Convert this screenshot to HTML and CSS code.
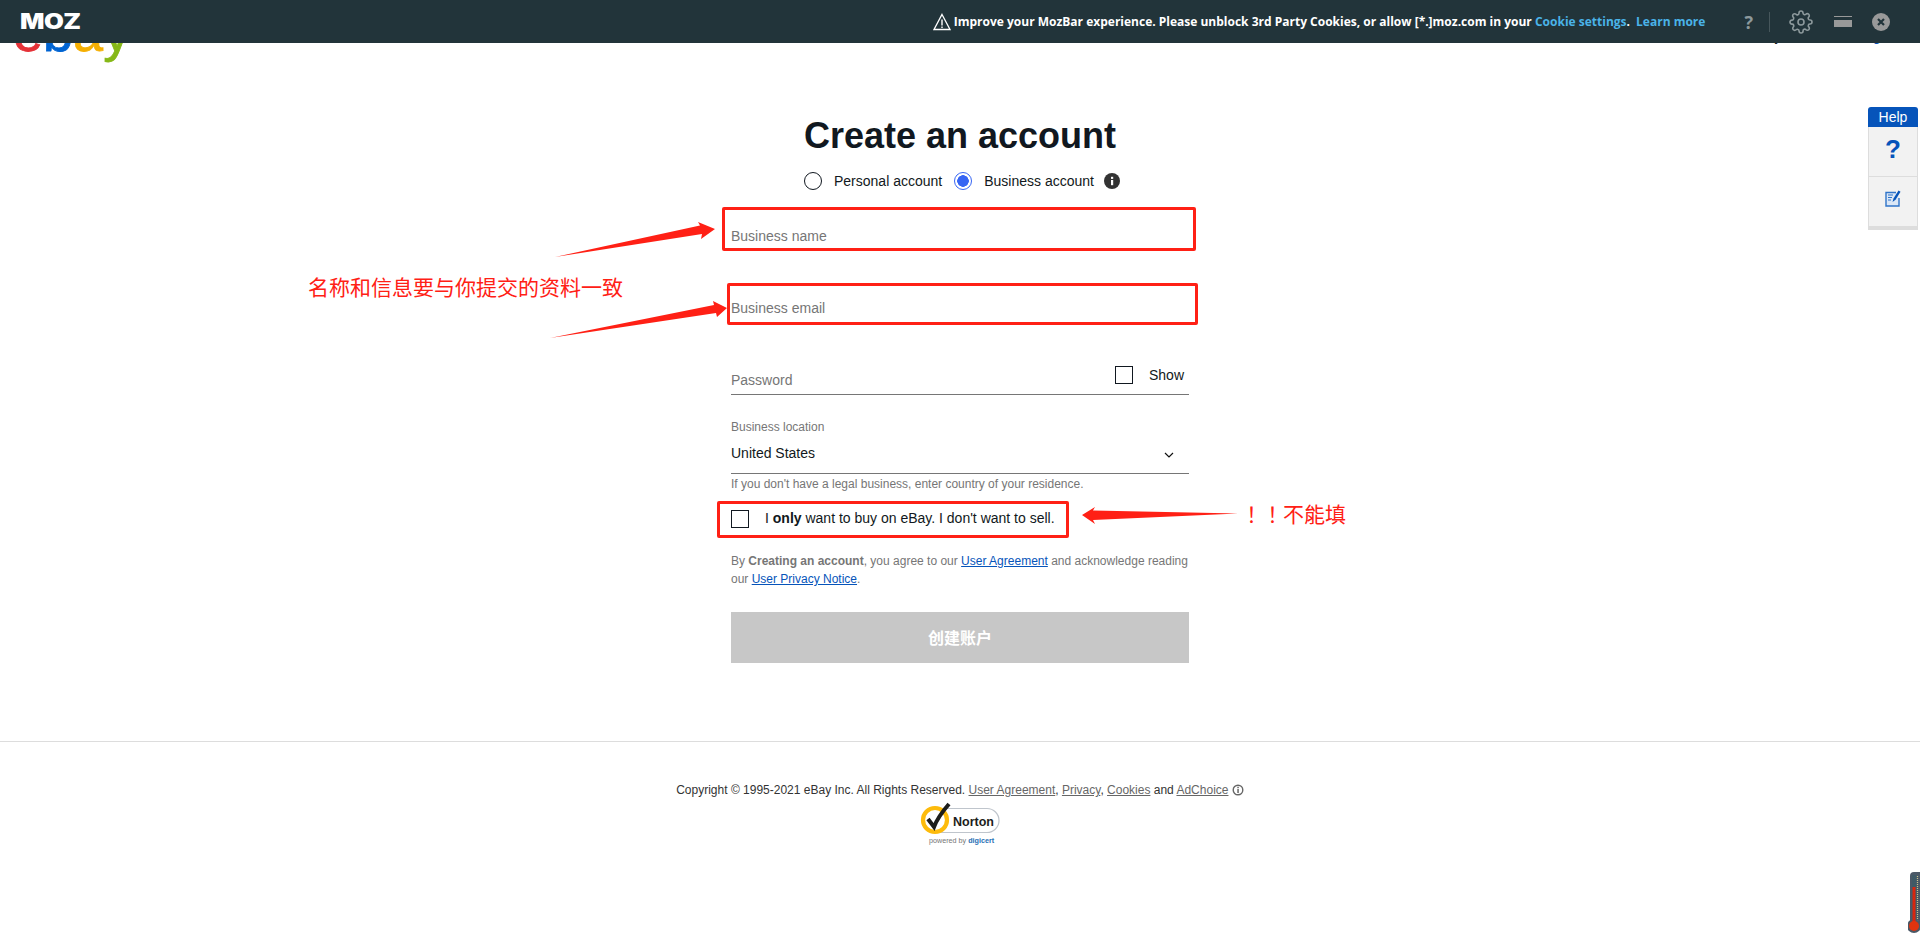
FILE: index.html
```html
<!DOCTYPE html>
<html lang="en">
<head>
<meta charset="utf-8">
<title>Create an account</title>
<link rel="stylesheet" href="styles.css">
</head>
<body>
<div class="page">
  <header class="site-header">
    <span class="ebay-logo"><span class="l-e">e</span><span class="l-b">b</span><span class="l-a">a</span><span class="l-y">y</span></span>
    <span class="member">Already a member? <a href="#" class="blue-link">Sign in</a></span>
  </header>

  <main class="form-wrap">
    <h1 class="title">Create an account</h1>
    <div class="account-type">
      <span class="radio"></span><span class="radio-label">Personal account</span>
      <span class="radio radio-on"></span><span class="radio-label">Business account</span>
      <svg class="info" viewBox="0 0 16 16"><circle cx="8" cy="8" r="8" fill="#333"/><rect x="7" y="7" width="2.2" height="5.2" fill="#fff"/><rect x="7" y="3.8" width="2.2" height="2.1" fill="#fff"/></svg>
    </div>

    <div class="fields">
      <div class="field">Business name</div>
      <div class="field">Business email</div>
      <div class="field field-password">
        <span>Password</span>
        <span class="show"><span class="check"></span><span class="show-label">Show</span></span>
      </div>
    </div>

    <div class="location">
      <div class="loc-label">Business location</div>
      <div class="loc-value"><span>United States</span>
        <svg class="chevron" viewBox="0 0 10 6"><path d="M1 1l4 4 4-4" fill="none" stroke="#111" stroke-width="1.2"/></svg>
      </div>
    </div>
    <p class="hint">If you don't have a legal business, enter country of your residence.</p>

    <div class="only-buy"><span class="check"></span><span class="only-text">I <b>only</b> want to buy on eBay. I don't want to sell.</span></div>

    <p class="legal">By <b>Creating an account</b>, you agree to our <a href="#" class="blue-link">User Agreement</a> and acknowledge reading our <a href="#" class="blue-link">User Privacy Notice</a>.</p>

    <button class="submit" type="button">创建账户</button>
  </main>

  <footer class="footer">
    <p class="copyright">Copyright © 1995-2021 eBay Inc. All Rights Reserved. <a href="#">User Agreement</a>, <a href="#">Privacy</a>, <a href="#">Cookies</a> and <a href="#">AdChoice</a> <svg class="adchoice" viewBox="0 0 12 12"><circle cx="6" cy="6" r="4.8" fill="none" stroke="#666" stroke-width="1.4"/><rect x="5.3" y="5" width="1.5" height="4" fill="#666"/><rect x="5.3" y="2.8" width="1.5" height="1.4" fill="#666"/></svg></p>
    <svg class="norton" viewBox="0 0 84 44">
      <rect x="14" y="6.5" width="67" height="24" rx="12" fill="#fff" stroke="#bfc5cc" stroke-width="1.2"/>
      <circle cx="17" cy="18" r="12" fill="#fff" stroke="#fdbb0b" stroke-width="4.2"/>
      <path d="M10 17l6 8c3-8 8-15 15-23" fill="none" stroke="#1d1d1b" stroke-width="4"/>
      <text x="35" y="24" class="norton-name">Norton</text>
      <text x="11" y="41" class="norton-by">powered by <tspan class="norton-digi">digicert</tspan></text>
    </svg>
  </footer>
</div>

<div class="mozbar">
  <span class="moz-logo">MOZ</span>
  <div class="moz-right">
    <svg class="warn" viewBox="0 0 18 18"><path d="M9 1.5L17 16.5H1z" fill="none" stroke="#fff" stroke-width="1.3"/><rect x="8.3" y="6.5" width="1.4" height="6" fill="#fff"/><rect x="8.3" y="13.5" width="1.4" height="1.5" fill="#fff"/></svg>
    <span class="moz-msg">Improve your MozBar experience. Please unblock 3rd Party Cookies, or allow [*.]moz.com in your <a href="#" class="moz-link">Cookie settings</a>. <a href="#" class="moz-link moz-learn">Learn more</a></span>
    <span class="moz-q">?</span>
    <span class="moz-sep"></span>
    <svg class="gear" viewBox="0 0 24 24"><circle cx="12" cy="12" r="3" fill="none" stroke="#8d999c" stroke-width="1.6"/><path fill="none" stroke="#8d999c" stroke-width="1.6" d="M19.4 15a1.65 1.65 0 0 0 .33 1.82l.06.06a2 2 0 0 1 0 2.83 2 2 0 0 1-2.83 0l-.06-.06a1.65 1.65 0 0 0-1.82-.33 1.65 1.65 0 0 0-1 1.51V21a2 2 0 0 1-2 2 2 2 0 0 1-2-2v-.09A1.65 1.65 0 0 0 9 19.4a1.65 1.65 0 0 0-1.82.33l-.06.06a2 2 0 0 1-2.83 0 2 2 0 0 1 0-2.83l.06-.06a1.65 1.65 0 0 0 .33-1.82 1.65 1.65 0 0 0-1.51-1H3a2 2 0 0 1-2-2 2 2 0 0 1 2-2h.09A1.65 1.65 0 0 0 4.6 9a1.65 1.65 0 0 0-.33-1.82l-.06-.06a2 2 0 0 1 0-2.83 2 2 0 0 1 2.83 0l.06.06a1.65 1.65 0 0 0 1.82.33H9a1.65 1.65 0 0 0 1-1.51V3a2 2 0 0 1 2-2 2 2 0 0 1 2 2v.09a1.65 1.65 0 0 0 1 1.51 1.65 1.65 0 0 0 1.82-.33l.06-.06a2 2 0 0 1 2.83 0 2 2 0 0 1 0 2.83l-.06.06a1.65 1.65 0 0 0-.33 1.82V9a1.65 1.65 0 0 0 1.51 1H21a2 2 0 0 1 2 2 2 2 0 0 1-2 2h-.09a1.65 1.65 0 0 0-1.51 1z"/></svg>
    <span class="moz-min"></span>
    <svg class="moz-close" viewBox="0 0 18 18"><circle cx="9" cy="9" r="9" fill="#999"/><path d="M6 6l6 6M12 6l-6 6" stroke="#22343a" stroke-width="2.2"/></svg>
  </div>
</div>

<aside class="help">
  <div class="help-head">Help</div>
  <div class="help-cell help-q">?</div>
  <div class="help-cell help-cell-form">
    <svg class="help-form" viewBox="0 0 16 18"><path d="M11 3.500H1v13.500h13V9" fill="#dbe7f6" stroke="#2f74c9" stroke-width="1.4"/><path d="M3 6h5M3 8.500h4M3 11h3" stroke="#2f74c9" stroke-width="1.1"/><path d="M7.500 13l1-3.500L13.500 1.500l2 1.200-5 8z" fill="#0654ba"/></svg>
  </div>
</aside>

<svg class="thermo" viewBox="0 0 12 62">
  <rect x="2" y="0" width="14" height="56" rx="4" fill="#4b5866"/>
  <rect x="4" y="3" width="4.500" height="50" fill="#3f5a66"/>
  <path d="M9.500 4v48" stroke="#c9c48a" stroke-width="1.200" stroke-dasharray="1 1"/>
  <circle cx="6" cy="54" r="7" fill="#4b5866"/>
  <rect x="4.500" y="15" width="3" height="38" fill="#d8260f"/>
  <circle cx="6" cy="54" r="5" fill="#e0340f"/>
</svg>

<div class="notes">
  <span class="note-box box-name"></span>
  <span class="note-box box-email"></span>
  <span class="note-box box-buy"></span>
  <span class="note-text note-match">名称和信息要与你提交的资料一致</span>
  <span class="note-text note-no">！！不能填</span>
  <svg class="note-arrows" viewBox="0 0 1920 937">
    <path d="M555 257L700 225.500 698 222 715 229 701 239 702 234Z"/>
    <path d="M550 338L714 305 713 301 727 308 717 317 716 313Z"/>
    <path d="M1238 513.500L1093 510.500 1095 507 1082 515 1095 524 1093 520Z"/>
  </svg>
</div>
</body>
</html>
```
FILE: styles.css
```css
* { box-sizing: border-box; }
html, body { margin: 0; padding: 0; height: 937px; overflow: hidden; background: #fff; }
body {
  position: relative;
  font-family: "Liberation Sans", "Noto Sans CJK SC", sans-serif;
  font-size: 14px;
  color: #111820;
}
a { color: inherit; }
.blue-link { color: #0654ba; }

.page { display: flex; flex-direction: column; height: 937px; }

/* header */
.site-header {
  height: 62px;
  padding: 0 17px 0 13px;
  display: flex;
  justify-content: space-between;
}
.ebay-logo { font-size: 54px; line-height: 50px; height: 50px; margin-top: 7px; -webkit-text-stroke: 0.8px; white-space: nowrap; }
.l-e { color: #e53238; }
.l-b { color: #0064d2; }
.l-a { color: #f5af02; }
.l-y { color: #86b817; }
.member { margin-top: 28px; line-height: 16px; }

/* form */
.form-wrap { width: 458px; margin: 0 auto; display: flex; flex-direction: column; align-items: stretch; }
.title { margin: 54px 0 0; height: 40px; line-height: 40px; font-size: 36px; font-weight: 700; text-align: center; white-space: nowrap; }
.account-type { margin-top: 15px; height: 20px; display: flex; align-items: center; justify-content: flex-start; margin-left: 73px; white-space: nowrap; }
.radio { width: 18px; height: 18px; border-radius: 50%; border: 1px solid #111820; flex: none; }
.radio-on { border-color: #3665f3; background: radial-gradient(circle, #3665f3 0 5.5px, #fff 6px); }
.radio-label { margin: 0 12px; }
.info { width: 16px; height: 16px; margin-left: -2px; }

.fields { margin-top: 20px; display: flex; flex-direction: column; gap: 32px; }
.field {
  height: 40px;
  padding-top: 17px;
  line-height: 16px;
  color: #767676;
  border-bottom: 1px solid #767676;
}
.field-password { display: flex; justify-content: space-between; position: relative; }
.show { display: flex; align-items: center; height: 18px; margin-top: -6px; margin-right: 5px; color: #111820; }
.show-label { margin-left: 16px; }
.check { width: 18px; height: 18px; border: 1px solid #111820; display: inline-block; flex: none; }

.location { margin-top: 23px; height: 56px; border-bottom: 1px solid #767676; }
.loc-label { font-size: 12px; line-height: 16px; padding-top: 1px; height: 17px; color: #767676; }
.loc-value { display: flex; justify-content: space-between; align-items: center; height: 18px; margin-top: 9px; padding-right: 15px; }
.chevron { width: 10px; height: 6px; margin-top: 3px; }
.hint { margin: 2px 0 0; font-size: 12px; line-height: 16px; color: #767676; white-space: nowrap; }

.only-buy { margin-top: 18px; height: 18px; display: flex; align-items: center; }
.only-text { margin-left: 16px; white-space: nowrap; position: relative; top: -1px; }

.legal { margin: 24px 0 0; font-size: 12px; line-height: 18px; color: #767676; }
.submit {
  margin-top: 24px;
  height: 51px;
  padding-bottom: 2px;
  border: 0;
  background: #c7c7c7;
  color: #fff;
  font: 700 16px "Liberation Sans", "Noto Sans CJK SC", sans-serif;
}

/* footer */
.footer { margin-top: 78px; border-top: 1px solid #ddd; display: flex; flex-direction: column; align-items: center; }
.copyright { margin: 40px 0 0; font-size: 12px; line-height: 16px; color: #333; white-space: nowrap; }
.copyright a { color: #666; }
.adchoice { width: 12px; height: 12px; vertical-align: -2px; }
.norton { width: 84px; height: 44px; margin-top: 4px; }
.norton-name { font: 700 12.5px "Liberation Sans", sans-serif; fill: #1d1d1b; }
.norton-by { font: 7.2px "Liberation Sans", sans-serif; fill: #767676; }
.norton-digi { fill: #1f6fb5; font-weight: 700; }

/* moz toolbar */
.mozbar {
  position: absolute;
  inset: 0 0 auto 0;
  height: 43px;
  background: #22343a;
  display: flex;
  justify-content: space-between;
  align-items: center;
  padding: 0 30px 0 20px;
  color: #fff;
}
.moz-logo { font: 900 21px/1 Inter, sans-serif; transform: scaleX(1.22); transform-origin: left center; letter-spacing: -0.5px; }
.moz-right { display: flex; align-items: center; }
.warn { width: 18px; height: 18px; margin-right: 3px; }
.moz-msg { font: 700 12px "Open Sans", sans-serif; white-space: nowrap; }
.moz-link { color: #4ab3e8; text-decoration: none; }
.moz-learn { margin-left: 3px; }
.moz-q { margin-left: 39px; font: 700 18px "Open Sans", sans-serif; color: #8d999c; }
.moz-sep { width: 1px; height: 20px; background: #46565b; margin-left: 16px; }
.gear { width: 24px; height: 24px; margin-left: 19px; }
.moz-min { width: 18px; height: 11px; margin-left: 21px; border-top: 1px solid #999; position: relative; background: linear-gradient(#22343a 0 3px, #999 3px); }
.moz-close { width: 18px; height: 18px; margin-left: 20px; }

/* help tab */
.help { position: absolute; top: 107px; right: 2px; width: 50px; box-shadow: 0 3px 0 #ddd; border-radius: 3px 3px 0 0; }
.help-head { height: 20px; background: #0654ba; color: #fff; font-size: 14px; line-height: 20px; text-align: center; border-radius: 3px 3px 0 0; }
.help-cell { height: 50px; background: #f2f2f2; border: 1px solid #ddd; border-top: 0; display: flex; align-items: center; justify-content: center; }
.help-q { color: #0654ba; font-size: 26px; font-weight: 700; padding-bottom: 4px; }
.help-cell-form { padding-bottom: 8px; }
.help-form { width: 16px; height: 18px; }

.thermo { position: absolute; top: 872px; right: 0; width: 12px; height: 62px; }

/* screenshot annotations */
.notes { position: absolute; inset: 0; pointer-events: none; }
.note-box { position: absolute; border: 3px solid #ff2015; border-radius: 2px; }
.box-name { left: 722px; top: 207px; width: 474px; height: 44px; }
.box-email { left: 727px; top: 283px; width: 471px; height: 42px; }
.box-buy { left: 717px; top: 501px; width: 352px; height: 37px; }
.note-text { position: absolute; color: #ff2015; font-size: 21px; line-height: 24px; font-weight: 400; white-space: nowrap; }
.note-match { left: 308px; top: 276px; }
.note-no { left: 1241px; top: 501px; font-family: "Noto Sans CJK TC", sans-serif; }
.note-arrows { position: absolute; inset: 0; width: 1920px; height: 937px; fill: #ff2015; }
```
